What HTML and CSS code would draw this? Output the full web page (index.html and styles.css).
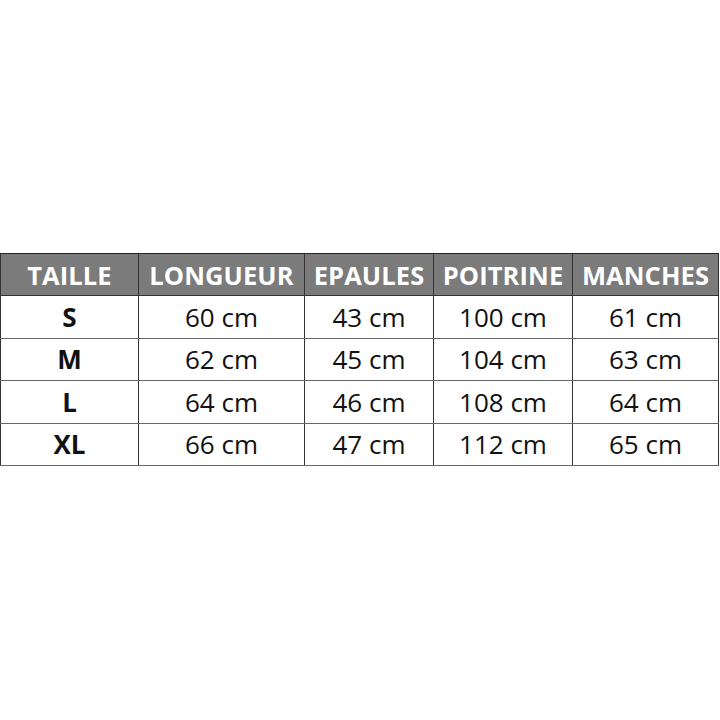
FILE: index.html
```
<!DOCTYPE html>
<html lang="fr">
<head>
<meta charset="utf-8">
<link rel="stylesheet" href="styles.css">
</head>
<body>
<div class="page">
<table class="sizes">
<colgroup>
<col class="c1"><col class="c2"><col class="c3"><col class="c4"><col class="c5">
</colgroup>
<thead>
<tr><th>TAILLE</th><th>LONGUEUR</th><th>EPAULES</th><th>POITRINE</th><th>MANCHES</th></tr>
</thead>
<tbody>
<tr><td class="sz">S</td><td>60 cm</td><td>43 cm</td><td>100 cm</td><td>61 cm</td></tr>
<tr><td class="sz">M</td><td>62 cm</td><td>45 cm</td><td>104 cm</td><td>63 cm</td></tr>
<tr><td class="sz">L</td><td>64 cm</td><td>46 cm</td><td>108 cm</td><td>64 cm</td></tr>
<tr><td class="sz">XL</td><td>66 cm</td><td>47 cm</td><td>112 cm</td><td>65 cm</td></tr>
</tbody>
</table>
</div>
</body>
</html>
```
FILE: styles.css
```
html, body {
  margin: 0;
  padding: 0;
  background: #ffffff;
}
.page {
  padding-top: 253px;
  width: 720px;
  height: 720px;
  box-sizing: border-box;
}
.sizes {
  border-collapse: collapse;
  table-layout: fixed;
  width: 718px;
  border: 1.5px solid #222;
  font-family: "Open Sans", "Liberation Sans", sans-serif;
  color: #111;
}
.c1 { width: 138px; }
.c2 { width: 166px; }
.c3 { width: 129px; }
.c4 { width: 139px; }
.c5 { width: 146px; }
.sizes th {
  background: #7b7b7b;
  color: #ffffff;
  font-weight: 700;
  font-size: 25.5px;
  height: 41px;
  padding: 0;
  text-align: center;
  border-left: 1px solid #333;
  border-right: 1px solid #333;
  border-bottom: 1px solid #333;
  white-space: nowrap;
  letter-spacing: 0.1px;
}
.sizes td {
  font-size: 26px;
  font-weight: 400;
  height: 41.5px;
  padding: 0;
  text-align: center;
  border-left: 1px solid #333;
  border-right: 1px solid #333;
  border-bottom: 1px solid #666;
}
.sizes td.sz {
  font-weight: 700;
}
```
